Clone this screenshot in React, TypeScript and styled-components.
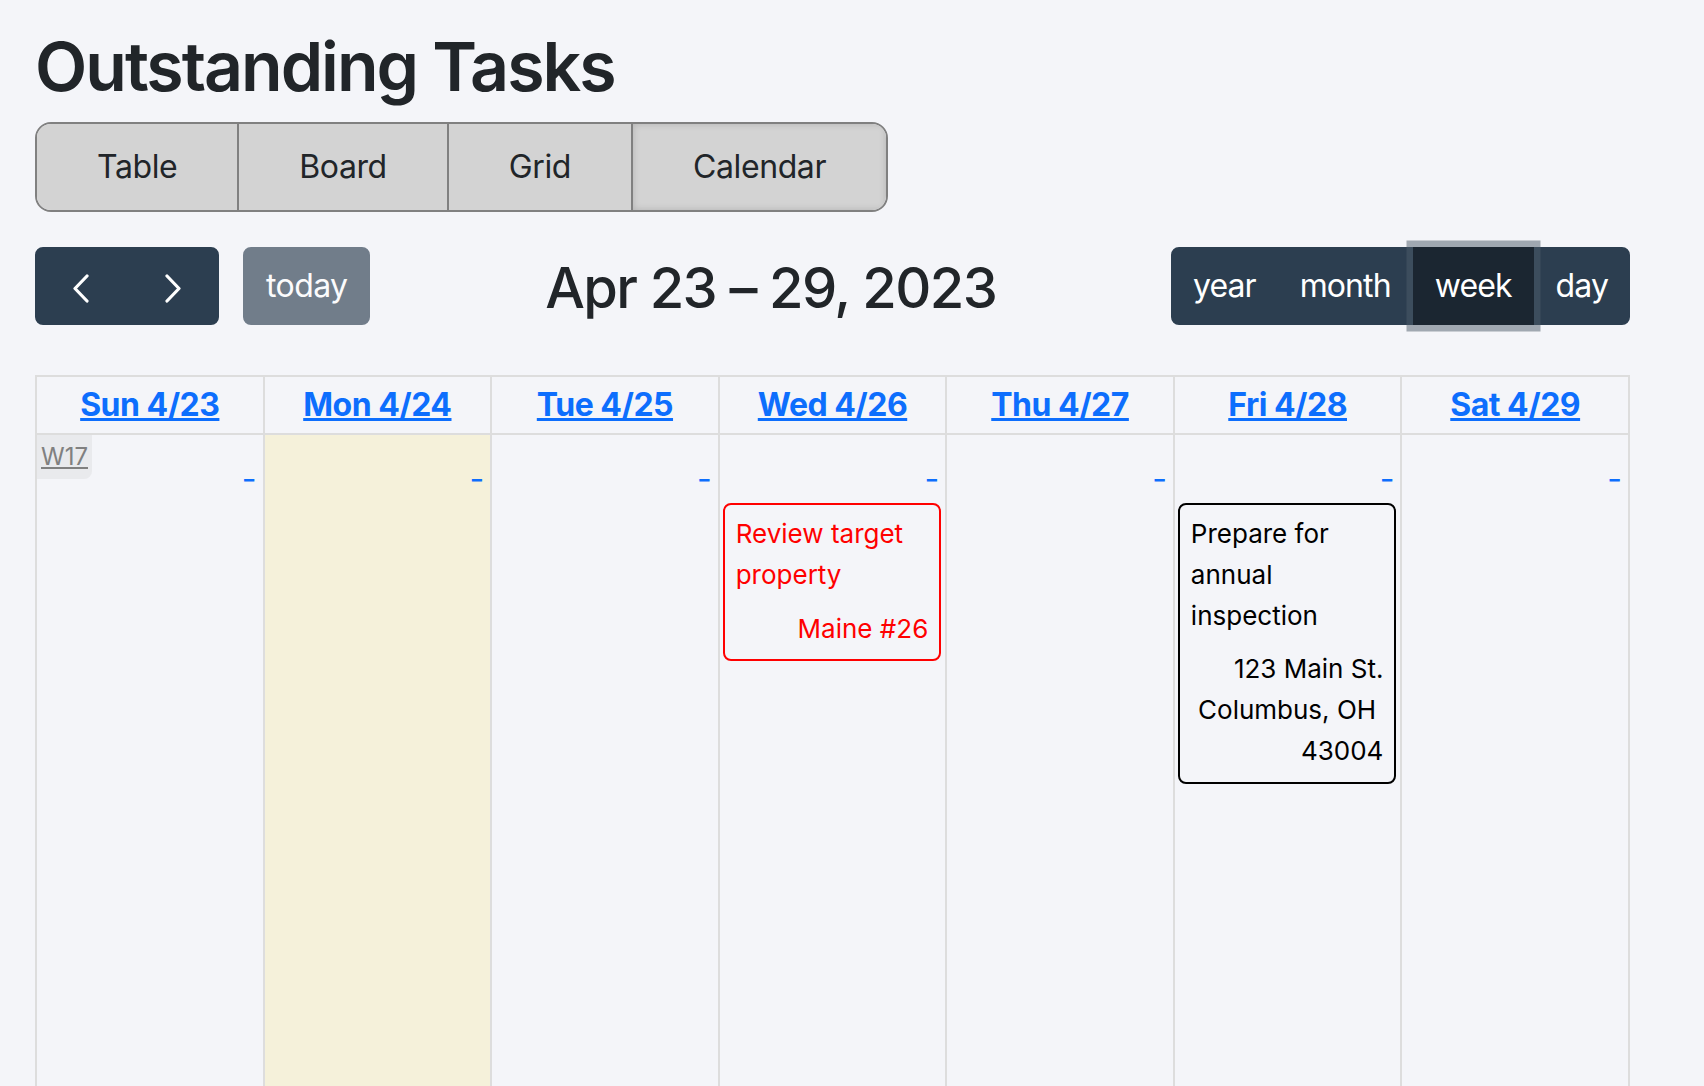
import React from "react";
import styled, { createGlobalStyle, css } from "styled-components";

const GlobalStyle = createGlobalStyle`
  html, body {
    margin: 0;
    height: 100%;
    overflow: hidden;
    background: #f4f5f9;
    color: #212529;
    font-family: Inter, "Noto Sans", "Liberation Sans", sans-serif;
  }
  * { box-sizing: border-box; }
`;

const Page = styled.div`
  height: 100vh;
  display: flex;
  flex-direction: column;
  padding: 0 74px 0 35px;
  overflow: hidden;
`;

const Title = styled.h1`
  flex-shrink: 0;
  margin: 0 0 14px;
  padding-top: 25px;
  font-size: 68px;
  line-height: 83px;
  font-weight: 600;
  letter-spacing: -2px;
`;

const ViewTabs = styled.div`
  flex-shrink: 0;
  display: flex;
  align-self: flex-start;
  border: 2px solid #808080;
  border-radius: 16px;
  overflow: hidden;
`;

const ViewTab = styled.button<{ $active?: boolean }>`
  font: inherit;
  font-size: 32px;
  line-height: 48px;
  letter-spacing: -0.4px;
  padding: 19px 60px;
  color: #212529;
  background: #d3d3d3;
  border: 0;
  border-left: 2px solid #808080;
  &:first-child { border-left: 0; }
  ${({ $active }) =>
    $active &&
    css`
      box-shadow: inset 0 0 7px rgba(0, 0, 0, 0.16);
    `}
`;

const Toolbar = styled.div`
  flex-shrink: 0;
  display: flex;
  justify-content: space-between;
  align-items: center;
  margin: 34px 0 50px;
  height: 79px;
`;

const Chunk = styled.div`
  display: flex;
  align-items: center;
`;

const Group = styled.div`
  display: flex;
  position: relative;
`;

const FcButton = styled.button<{ $active?: boolean; $pos?: "first" | "middle" | "last" }>`
  font: inherit;
  font-size: 32px;
  line-height: 48px;
  letter-spacing: -0.9px;
  height: 78px;
  padding: 0 20px;
  color: #fff;
  background: #2c3e50;
  border: 2px solid #2c3e50;
  border-radius: ${({ $pos }) =>
    $pos === "first" ? "8px 0 0 8px" : $pos === "last" ? "0 8px 8px 0" : $pos === "middle" ? "0" : "8px"};
  position: relative;
  ${({ $active }) =>
    $active &&
    css`
      background: #1b2631;
      border-color: #1b2631;
      z-index: 1;
      box-shadow: 0 0 0 6.5px rgba(76, 91, 106, 0.5);
    `}
`;

const IconButton = styled(FcButton)`
  width: 92px;
  padding: 0;
  display: flex;
  align-items: center;
  justify-content: center;
  svg {
    margin-top: 5px;
  }
`;

const TodayButton = styled(FcButton)`
  margin-left: 24px;
  opacity: 0.65;
  padding: 0 21px;
  letter-spacing: -0.6px;
`;

const DateTitle = styled.h2`
  margin: 0;
  font-size: 56px;
  line-height: 67px;
  font-weight: 500;
  letter-spacing: -1.6px;
  padding-top: 6px;
`;

const Table = styled.div`
  flex: 1;
  min-height: 0;
  display: grid;
  grid-template-columns: repeat(7, 1fr);
  grid-template-rows: auto 1fr;
  border-left: 2px solid #dddddd;
  border-top: 2px solid #dddddd;
`;

const HeadCell = styled.div`
  padding: 4px 0;
  text-align: center;
  font-size: 32px;
  line-height: 48px;
  border-right: 2px solid #dddddd;
  border-bottom: 2px solid #dddddd;
`;

const HeadLink = styled.a`
  color: #0d6efd;
  font-weight: 700;
  text-decoration: underline;
  letter-spacing: -0.5px;
`;

const DayCell = styled.div<{ $today?: boolean }>`
  position: relative;
  border-right: 2px solid #dddddd;
  background: ${({ $today }) => ($today ? "rgba(255, 220, 40, 0.15)" : "transparent")};
`;

const DayTop = styled.div`
  display: flex;
  justify-content: flex-end;
  padding: 20px 6px 0 0;
  font-size: 32px;
  line-height: 48px;
  color: #0d6efd;
`;

const WeekNum = styled.a`
  position: absolute;
  top: 0;
  left: 0;
  padding: 4px;
  font-size: 24px;
  line-height: 36px;
  color: #808080;
  text-decoration: underline;
  background: rgba(208, 208, 208, 0.3);
  border-radius: 0 0 8px 0;
`;

const EventCard = styled.div<{ $color: string }>`
  margin: 0 4px 0 3px;
  padding: 9px 10px 10px 11px;
  border: 2px solid ${({ $color }) => $color};
  border-radius: 8px;
  color: ${({ $color }) => $color};
  font-size: 26px;
  line-height: 40.8px;
`;

const EventLocation = styled.div`
  margin-top: 13px;
  text-align: right;
  padding-right: 1px;
`;

const LocationLine = styled.div`
  white-space: break-spaces;
`;

const Chevron = ({ dir }: { dir: "left" | "right" }) => (
  <svg width="18" height="29" viewBox="0 0 18 29" fill="none">
    <polyline
      points={dir === "left" ? "15,2 3,14.5 15,27" : "3,2 15,14.5 3,27"}
      stroke="#fff"
      strokeWidth="3.2"
      strokeLinecap="round"
      strokeLinejoin="round"
    />
  </svg>
);

type Ev = { title: string; location: string[]; color: string };

const days: { label: string; today?: boolean; events: Ev[] }[] = [
  { label: "Sun 4/23", events: [] },
  { label: "Mon 4/24", today: true, events: [] },
  { label: "Tue 4/25", events: [] },
  { label: "Wed 4/26", events: [{ title: "Review target property", location: ["Maine #26"], color: "#ff0000" }] },
  { label: "Thu 4/27", events: [] },
  {
    label: "Fri 4/28",
    events: [
      {
        title: "Prepare for annual inspection",
        location: ["123 Main St.", "Columbus, OH 43004"],
        color: "#000000",
      },
    ],
  },
  { label: "Sat 4/29", events: [] },
];

const views = ["year", "month", "week", "day"];

export default function App() {
  return (
    <>
      <GlobalStyle />
      <Page>
        <Title>Outstanding Tasks</Title>
        <ViewTabs>
          <ViewTab>Table</ViewTab>
          <ViewTab>Board</ViewTab>
          <ViewTab>Grid</ViewTab>
          <ViewTab $active>Calendar</ViewTab>
        </ViewTabs>

        <Toolbar>
          <Chunk>
            <Group>
              <IconButton $pos="first" aria-label="prev">
                <Chevron dir="left" />
              </IconButton>
              <IconButton $pos="last" aria-label="next">
                <Chevron dir="right" />
              </IconButton>
            </Group>
            <TodayButton>today</TodayButton>
          </Chunk>
          <DateTitle>Apr 23 – 29, 2023</DateTitle>
          <Group>
            {views.map((v, i) => (
              <FcButton
                key={v}
                $active={v === "week"}
                $pos={i === 0 ? "first" : i === views.length - 1 ? "last" : "middle"}
              >
                {v}
              </FcButton>
            ))}
          </Group>
        </Toolbar>

        <Table>
          {days.map((d) => (
            <HeadCell key={d.label}>
              <HeadLink>{d.label}</HeadLink>
            </HeadCell>
          ))}
          {days.map((d, i) => (
            <DayCell key={d.label} $today={d.today}>
              {i === 0 && <WeekNum>W17</WeekNum>}
              <DayTop>-</DayTop>
              {d.events.map((ev) => (
                <EventCard key={ev.title} $color={ev.color}>
                  <div>{ev.title}</div>
                  <EventLocation>
                    {ev.location.map((l) => (
                      <LocationLine key={l}>{l}</LocationLine>
                    ))}
                  </EventLocation>
                </EventCard>
              ))}
            </DayCell>
          ))}
        </Table>
      </Page>
    </>
  );
}
